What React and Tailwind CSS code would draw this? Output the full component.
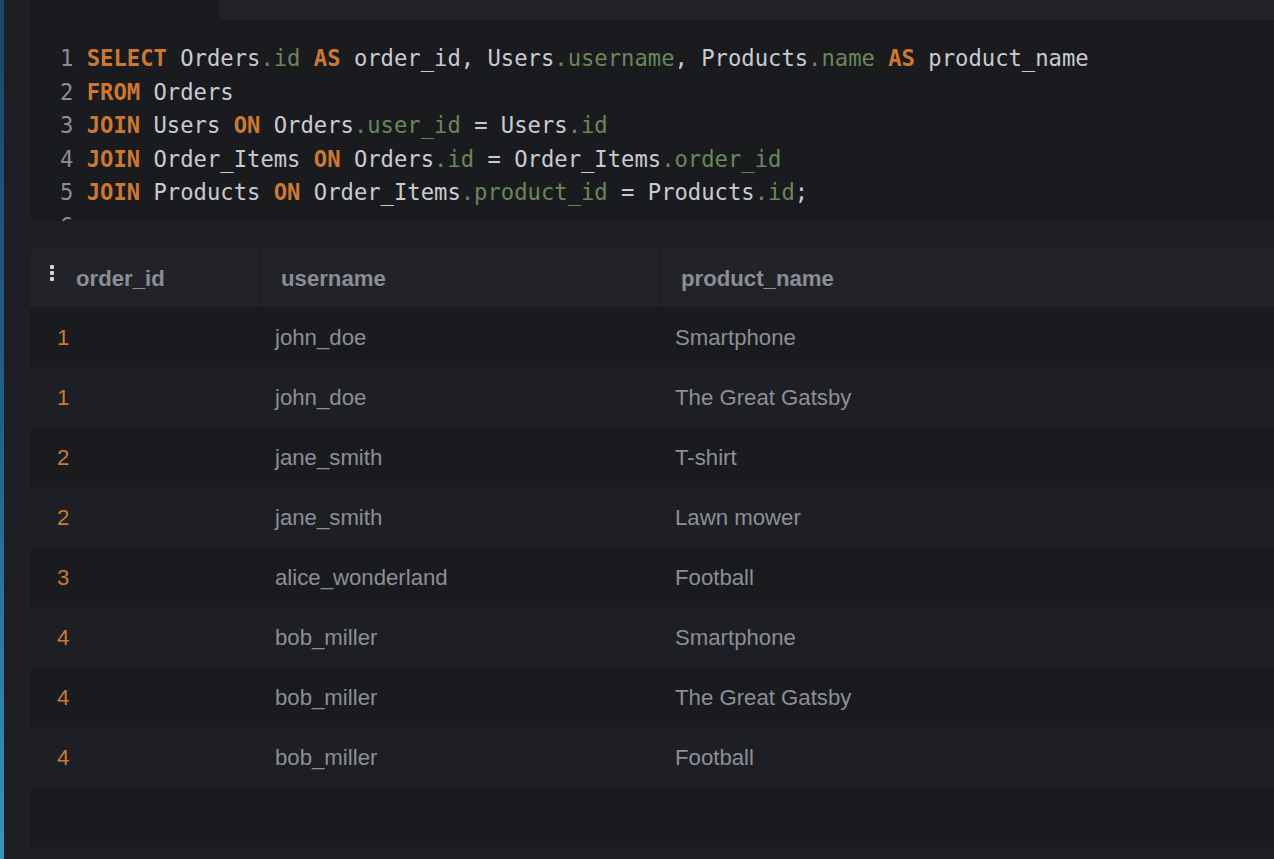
import React from 'react';

const K = ({ children }) => <span className="text-[#cc7832] font-bold">{children}</span>;
const P = ({ children }) => <span className="text-[#6a8759]">{children}</span>;

const lines = [
  <>
    <K>SELECT</K> Orders<P>.id</P> <K>AS</K> order_id, Users<P>.username</P>, Products<P>.name</P> <K>AS</K> product_name
  </>,
  <>
    <K>FROM</K> Orders
  </>,
  <>
    <K>JOIN</K> Users <K>ON</K> Orders<P>.user_id</P> = Users<P>.id</P>
  </>,
  <>
    <K>JOIN</K> Order_Items <K>ON</K> Orders<P>.id</P> = Order_Items<P>.order_id</P>
  </>,
  <>
    <K>JOIN</K> Products <K>ON</K> Order_Items<P>.product_id</P> = Products<P>.id</P>;
  </>,
  <></>,
];

const rows = [
  [1, 'john_doe', 'Smartphone'],
  [1, 'john_doe', 'The Great Gatsby'],
  [2, 'jane_smith', 'T-shirt'],
  [2, 'jane_smith', 'Lawn mower'],
  [3, 'alice_wonderland', 'Football'],
  [4, 'bob_miller', 'Smartphone'],
  [4, 'bob_miller', 'The Great Gatsby'],
  [4, 'bob_miller', 'Football'],
];

function Kebab() {
  return (
    <div className="flex flex-col gap-[2px] -mt-[11px] mr-[22px]">
      <span className="w-[4px] h-[4px] rounded-[1px] bg-[#d4d6d9]" />
      <span className="w-[4px] h-[4px] rounded-[1px] bg-[#d4d6d9]" />
      <span className="w-[4px] h-[4px] rounded-[1px] bg-[#d4d6d9]" />
    </div>
  );
}

export default function App() {
  return (
    <div className="w-[1274px] h-[859px] flex bg-[#1e1f24] overflow-hidden">
      <div className="w-[4px] shrink-0 bg-gradient-to-b from-[#1d4668] via-[#25608a] to-[#3c93b8]" />
      <div className="flex-1 flex flex-col pl-[26px] min-w-0">
        {/* editor */}
        <div className="h-[221px] shrink-0 bg-[#1a1b1f] rounded-bl-[10px] overflow-hidden flex flex-col">
          <div className="h-[20px] shrink-0 flex">
            <div className="w-[189px] bg-[#1a1b1f]" />
            <div className="flex-1 bg-[#222328]" />
          </div>
          <div className="pt-[22px] pl-[30px] font-['DejaVu_Sans_Mono',monospace] text-[22.2px] leading-[33.5px] text-[#c9cbce] whitespace-pre">
            {lines.map((l, i) => (
              <div key={i}>
                <span className="text-[#8a8d92]">{i + 1}</span> {l}
              </div>
            ))}
          </div>
        </div>

        {/* results */}
        <div className="mt-[27px] flex-1 flex flex-col rounded-tl-[8px] overflow-hidden font-['Liberation_Sans',Arial,sans-serif] text-[22.2px]">
          <div className="h-[59px] shrink-0 flex gap-[2px] bg-[#1e1f24] font-bold text-[#8a8e95]">
            <div className="w-[229px] shrink-0 bg-[#222328] flex items-center pl-[20px] pt-[2px]">
              <Kebab />
              order_id
            </div>
            <div className="w-[398px] shrink-0 bg-[#222328] flex items-center pl-[20px] pt-[2px]">username</div>
            <div className="flex-1 bg-[#222328] flex items-center pl-[20px] pt-[2px]">product_name</div>
          </div>
          {rows.map((r, i) => (
            <div
              key={i}
              className={`h-[60px] shrink-0 flex items-center pt-[2px] text-[#8c8f95] ${i % 2 === 0 ? 'bg-[#1a1b1f]' : 'bg-[#1e1f24]'}`}
            >
              <div className="w-[231px] shrink-0 pl-[27px] text-[#c87a36]">{r[0]}</div>
              <div className="w-[400px] shrink-0 pl-[14px]">{r[1]}</div>
              <div className="flex-1 pl-[14px]">{r[2]}</div>
            </div>
          ))}
          <div className="h-[60px] shrink-0 bg-[#1a1b1f]" />
        </div>
      </div>
    </div>
  );
}
